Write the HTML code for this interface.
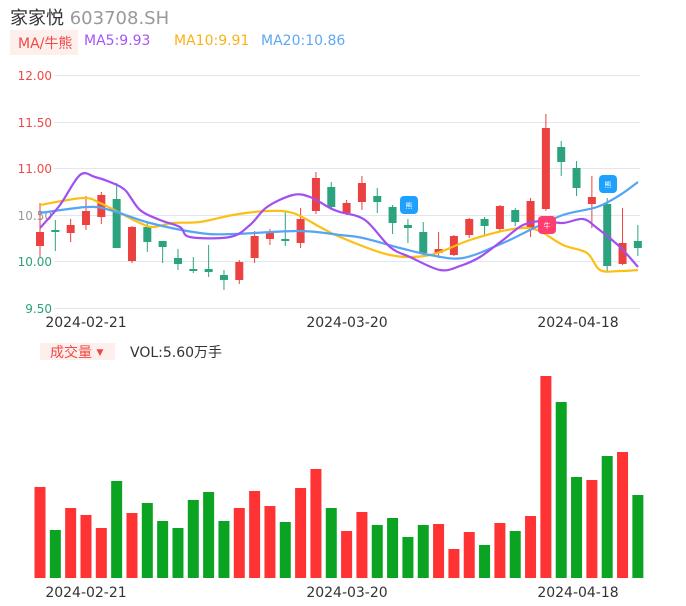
<!DOCTYPE html><html><head><meta charset="utf-8"><style>
body{margin:0;width:686px;height:606px;background:#fff;font-family:"DejaVu Sans","Noto Sans CJK SC",sans-serif;overflow:hidden;position:relative}
.a{position:absolute;white-space:nowrap}
</style></head><body>
<div class="a" style="left:10px;top:4px;font-size:18px;color:#333">家家悦 <span style="color:#999">603708.SH</span></div>
<div class="a" style="left:10px;top:30px;width:68px;height:25px;background:#fdf0ec"></div>
<div class="a" style="left:18px;top:33px;font-size:14px;color:#f04848">MA/牛熊</div>
<div class="a" style="left:84px;top:33px;font-size:14px;color:#a855f7">MA5:9.93</div>
<div class="a" style="left:174px;top:33px;font-size:14px;color:#fbb11a">MA10:9.91</div>
<div class="a" style="left:261px;top:33px;font-size:14px;color:#5ea8f5">MA20:10.86</div>
<div class="a" style="left:40px;top:343px;width:75px;height:17px;background:#fdf0ec"></div>
<div class="a" style="left:50px;top:342px;font-size:14px;color:#f04848">成交量 <span style="font-size:9px;vertical-align:2px">▼</span></div>
<div class="a" style="left:130px;top:342px;font-size:14px;color:#333">VOL:5.60万手</div>
<svg class="a" style="left:0;top:0" width="686" height="606">
<g stroke="#e3e6ee" stroke-width="1">
<line x1="54" x2="640" y1="75.5" y2="75.5"/><line x1="54" x2="640" y1="122.5" y2="122.5"/><line x1="54" x2="640" y1="168.5" y2="168.5"/><line x1="54" x2="640" y1="215.5" y2="215.5"/><line x1="54" x2="640" y1="261.5" y2="261.5"/><line x1="54" x2="640" y1="308.5" y2="308.5"/></g>
<g font-size="12" text-anchor="end" font-family="DejaVu Sans,sans-serif">
<text x="52" y="80" fill="#f04848">12.00</text><text x="52" y="127" fill="#f04848">11.50</text><text x="52" y="173" fill="#f04848">11.00</text><text x="52" y="220" fill="#999">10.50</text><text x="52" y="266" fill="#2aa17f">10.00</text><text x="52" y="313" fill="#2aa17f">9.50</text></g>
<g font-size="14" fill="#333" text-anchor="middle" font-family="DejaVu Sans,sans-serif">
<text x="86" y="327">2024-02-21</text><text x="347" y="327">2024-03-20</text><text x="578" y="327">2024-04-18</text>
<text x="86" y="597">2024-02-21</text><text x="347" y="597">2024-03-20</text><text x="578" y="597">2024-04-18</text></g>
<g id="c"></g>
<g fill="none" stroke-width="2.2" stroke-linejoin="round">
<path id="y" stroke="#fcbf16"/><path id="b" stroke="#55a4f5"/><path id="p" stroke="#a14ff0"/>
</g>
<g>
<rect x="400" y="196" width="18" height="18" rx="4" fill="#1ea0ff"/><text x="409" y="208" font-size="7" fill="#fff" text-anchor="middle">熊</text>
<rect x="599" y="175" width="18" height="18" rx="4" fill="#1ea0ff"/><text x="608" y="187" font-size="7" fill="#fff" text-anchor="middle">熊</text>
<rect x="538" y="216" width="18" height="18" rx="4" fill="#ff3d6e"/><text x="547" y="228" font-size="7" fill="#fff" text-anchor="middle">牛</text>
</g>
<g id="v"></g>
</svg>
<script>
var d=[[1,232,246,203,257],[0,230,232,220,251],[1,225,233,219,242],[1,211,225,196,230],[1,195,217,192,224],[0,199,248,183,248],[1,227,261,226,263],[0,227,242,222,252],[0,241,247,241,263],[0,258,264,249,270],[0,269,271,257,273],[0,269,272,245,277],[0,275,280,270,290],[1,262,280,260,284],[1,236,258,231,263],[1,232,239,229,245],[0,239,241,212,246],[1,219,243,208,248],[1,178,211,172,214],[0,187,207,182,210],[1,203,213,200,215],[1,183,202,176,210],[0,196,202,188,213],[0,207,223,205,234],[0,225,228,219,243],[0,232,253,222,257],[1,249,253,232,258],[1,236,255,235,256],[1,219,235,218,238],[0,219,226,217,236],[1,206,229,205,232],[0,210,222,208,226],[1,201,229,198,237],[1,128,209,114,211],[0,147,162,141,176],[0,168,188,161,196],[1,197,204,176,228],[0,204,266,198,272],[1,243,264,208,265],[0,241,248,225,256]];
var v=[487,530,508,515,528,481,513,503,521,528,500,492,521,508,491,506,522,488,469,508,531,512,525,518,537,525,524,549,532,545,523,531,516,376,402,477,480,456,452,495];
var s='',w='';
d.forEach(function(c,i){var x=40+15.33*i,col=c[0]?'#eb4141':'#2ca37f';
s+='<line x1="'+x+'" x2="'+x+'" y1="'+c[3]+'" y2="'+c[4]+'" stroke="'+col+'" stroke-width="1"/>';
s+='<rect x="'+(x-4)+'" y="'+c[1]+'" width="8" height="'+Math.max(2,c[2]-c[1])+'" fill="'+col+'"/>';
w+='<rect x="'+(x-5.5)+'" y="'+v[i]+'" width="11" height="'+(578-v[i])+'" fill="'+(c[0]?'#ff3333':'#0aa322')+'"/>';});
document.getElementById('c').innerHTML=s;document.getElementById('v').innerHTML=w;
function sm(a){var p='M'+a[0][0]+','+a[0][1];for(var i=0;i<a.length-1;i++){var p0=a[i-1]||a[i],p1=a[i],p2=a[i+1],p3=a[i+2]||p2;
p+=' C'+(p1[0]+(p2[0]-p0[0])/6)+','+(p1[1]+(p2[1]-p0[1])/6)+' '+(p2[0]-(p3[0]-p1[0])/6)+','+(p2[1]-(p3[1]-p1[1])/6)+' '+p2[0]+','+p2[1];}return p;}
var Y=[[40,205],[83,198],[100,203],[120,213],[140,223],[153,227],[173,223],[200,222],[233,215],[267,211],[293,213],[320,227],[340,237],[390,255],[430,255],[470,240],[513,229],[537,230],[563,245],[587,253],[600,270],[620,271],[638,270]];
var B=[[40,213],[87,207],[110,210],[150,223],[200,233],[233,234],[300,231],[340,235],[363,238],[400,248],[430,255],[463,258],[503,243],[530,230],[563,215],[597,207],[620,195],[638,182]];
var P=[[40,228],[60,205],[80,175],[95,177],[110,182],[125,190],[140,210],[160,220],[180,227],[190,237],[230,237],[250,225],[267,207],[293,195],[310,197],[330,208],[340,212],[365,220],[390,247],[410,257],[440,270],[460,266],[480,257],[503,240],[523,225],[543,221],[563,223],[583,219],[597,228],[620,247],[638,267]];
document.getElementById('y').setAttribute('d',sm(Y));document.getElementById('b').setAttribute('d',sm(B));document.getElementById('p').setAttribute('d',sm(P));
</script>
</body></html>
